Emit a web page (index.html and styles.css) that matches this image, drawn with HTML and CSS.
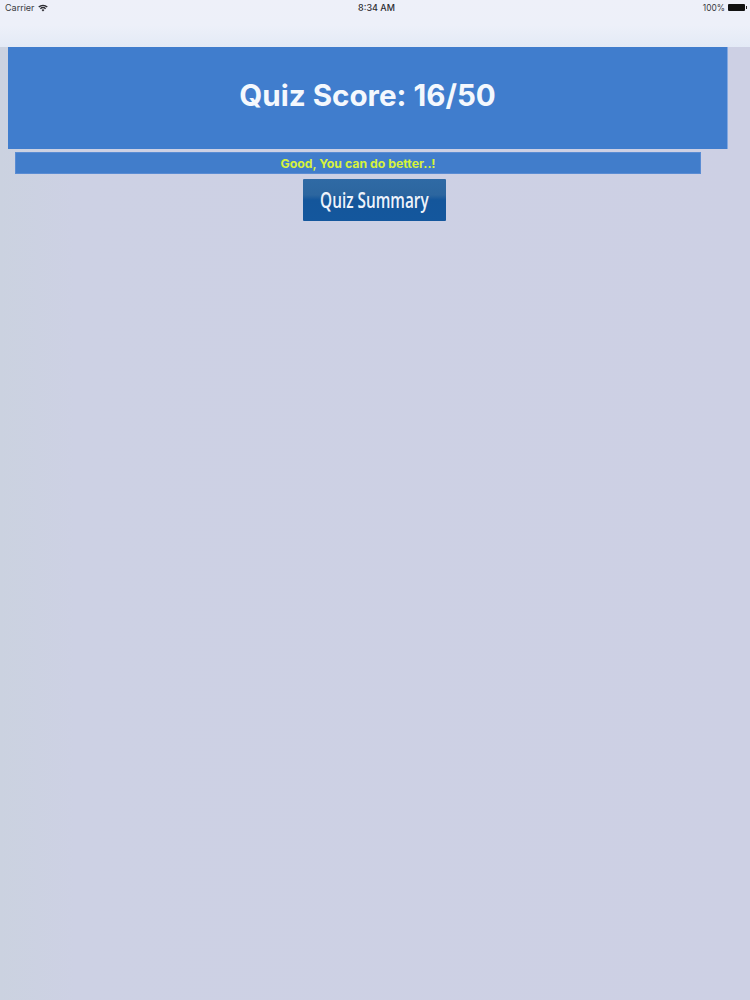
FILE: index.html
```html
<!DOCTYPE html>
<html lang="en">
<head>
<meta charset="utf-8">
<title>Quiz Score</title>
<link rel="stylesheet" href="styles.css">
</head>
<body>
<header class="nav">
  <div class="status">
    <div class="status-left">
      <span>Carrier</span>
      <svg class="wifi" viewBox="0 0 12 9" aria-hidden="true"><path d="M6 8.8 4.3 6.9a2.5 2.5 0 0 1 3.4 0zM3.4 6 2.3 4.8a5.5 5.5 0 0 1 7.4 0L8.600 6a4 4 0 0 0-5.200 0zM1.500 4 .3 2.800a8.500 8.500 0 0 1 11.400 0L10.500 4a7 7 0 0 0-9 0z"/></svg>
    </div>
    <span class="time">8:34 AM</span>
    <div class="status-right">
      <span class="percent">100%</span>
      <span class="battery"><span class="battery-cap"></span></span>
    </div>
  </div>
</header>
<main class="content">
  <h1 class="score">Quiz Score: 16/50</h1>
  <p class="message">Good, You can do better..!</p>
  <div class="actions">
    <button class="summary" type="button"><span class="summary-label">Quiz Summary</span></button>
  </div>
</main>
</body>
</html>
```
FILE: styles.css
```css
* { box-sizing: border-box; }
html, body { margin: 0; height: 100%; }
body {
  width: 750px;
  height: 1000px;
  overflow: hidden;
  background: linear-gradient(90deg, #cbd2e0 0%, #cdd1e4 10%, #cdd0e4 100%);
  font-family: Inter, "Liberation Sans", sans-serif;
}
.nav {
  height: 47px;
  background: linear-gradient(180deg, #eef0f9 0%, #edf0f9 55%, #e3eaf6 100%);
}
.status {
  height: 15px;
  padding: 0 4px 0 5px;
  display: flex;
  justify-content: space-between;
  align-items: center;
  font-size: 9px;
  color: #3a3a40;
}
.status-left { width: 300px; display: flex; align-items: center; gap: 3px; }
.wifi { width: 10px; height: 8px; fill: #2a2a30; }
.time { font-weight: 500; color: #2c2c32; margin-left: 2px; }
.status-right { width: 300px; display: flex; align-items: center; justify-content: flex-end; gap: 3px; }
.percent { font-size: 8.400px; }
.battery { position: relative; width: 17px; height: 7px; border-radius: 1px; background: #111; margin-right: 1px; }
.battery-cap { position: absolute; right: -2px; top: 2px; width: 1.500px; height: 3px; background: #222; }
.content { display: flex; flex-direction: column; }
.score {
  margin: 0 22px 0 8px;
  height: 102px;
  padding-bottom: 6px;
  display: flex;
  align-items: center;
  justify-content: center;
  background: #407dcd;
  border-right: 1px solid #83a8e0;
  color: #f4f8fd;
  font-size: 29.600px;
  font-weight: 700;
}
.message {
  margin: 3px 49px 0 15px;
  height: 22px;
  display: flex;
  align-items: center;
  justify-content: center;
  background: #417dcb;
  border: 1px solid #5a8cd3;
  color: #d6f23c;
  font-size: 12.300px;
  font-weight: 700;
}
.actions { display: flex; margin-top: 5px; padding-left: 303px; }
.summary {
  width: 143px;
  height: 42px;
  padding: 0;
  border: 0;
  border-radius: 1px;
  display: flex;
  align-items: center;
  justify-content: center;
  background: linear-gradient(180deg, #2f6aa5 0%, #2c669f 38%, #14569b 50%, #14579d 100%);
  color: #eef3fa;
  font-family: "Open Sans", sans-serif;
  font-size: 21px;
  font-weight: 600;
}
.summary-label { flex: none; transform: scaleX(.73); white-space: nowrap; }
```
